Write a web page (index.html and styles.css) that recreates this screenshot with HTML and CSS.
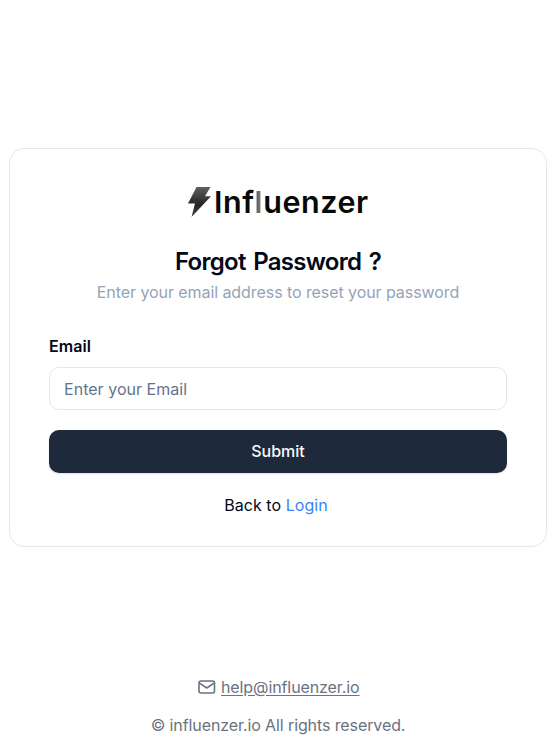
FILE: index.html
```html
<!DOCTYPE html>
<html lang="en">
<head>
<meta charset="utf-8">
<title>Forgot Password</title>
<link rel="stylesheet" href="styles.css">
</head>
<body>
<main class="card">
  <div class="logo">
    <svg class="bolt" viewBox="0 0 23 30" aria-hidden="true">
      <defs><linearGradient id="g" x1="0" y1="0" x2="0" y2="1"><stop offset="0" stop-color="#606060"/><stop offset=".6" stop-color="#242424"/><stop offset="1" stop-color="#444"/></linearGradient></defs>
      <path d="M8.5 0H22.5L17 9.3H23L3.5 30L7 16.5H0Z" fill="url(#g)"/>
    </svg>
    <span class="brand">Inf<span class="fade">l</span>uenzer</span>
  </div>
  <h1 class="title">Forgot Password ?</h1>
  <p class="subtitle">Enter your email address to reset your password</p>
  <form class="form">
    <label class="label" for="email">Email</label>
    <input class="input" id="email" type="email" placeholder="Enter your Email">
    <button class="submit" type="button">Submit</button>
  </form>
  <p class="back">Back to <a class="login" href="#">Login</a></p>
</main>
<footer class="footer">
  <div class="contact">
    <svg class="mail" viewBox="0 0 18 14" aria-hidden="true"><rect x="1" y="1" width="15.5" height="12" rx="2"/><path d="M1.5 3.2L8.75 8L16 3.2"/></svg>
    <a class="help" href="#">help@influenzer.io</a>
  </div>
  <p class="rights">© influenzer.io All rights reserved.</p>
</footer>
</body>
</html>
```
FILE: styles.css
```css
* { box-sizing: border-box; }
body {
  margin: 0;
  height: 744px;
  overflow: hidden;
  background: #fff;
  color: #020817;
  font: 400 16px/24px Inter, "Liberation Sans", sans-serif;
}
h1, p { margin: 0; }
.card {
  width: 538px;
  height: 399px;
  margin: 148px 0 0 9px;
  padding: 37px 39px 0;
  border: 1px solid #e2e8f0;
  border-radius: 15px;
}
.logo {
  display: flex;
  height: 32px;
  padding: 1px 0 0 139px;
}
.bolt { flex: none; width: 23px; height: 30px; }
.brand {
  margin: -1px 0 0 3px;
  color: #080808;
  font-size: 30.5px;
  font-weight: 600;
  line-height: 32px;
  letter-spacing: 0.55px;
  white-space: nowrap;
}
.fade {
  background: linear-gradient(90deg, #555, #888);
  background-clip: text;
  color: transparent;
}
.title {
  margin-top: 27px;
  text-align: center;
  font-size: 24px;
  font-weight: 600;
  line-height: 34px;
  letter-spacing: -0.7px;
  word-spacing: 2px;
}
.subtitle {
  margin-top: -1px;
  color: #94a3b8;
  text-align: center;
  line-height: 28px;
  letter-spacing: -0.07px;
}
.form { display: flex; flex-direction: column; margin-top: 27px; }
.label { font-weight: 600; line-height: 26px; letter-spacing: 0.1px; }
.input {
  height: 43px;
  margin-top: 8px;
  padding: 0 14px;
  border: 1px solid #e2e8f0;
  border-radius: 10px;
  font: inherit;
  letter-spacing: 0.03px;
}
.input::placeholder { color: #64748b; opacity: 1; }
.submit {
  height: 43px;
  margin-top: 20px;
  padding: 0 0 2px;
  border: 0;
  border-radius: 10px;
  background: #1e293b;
  box-shadow: 0 1px 2px rgb(0 0 0 / 12%);
  color: #f8fafc;
  font: inherit;
  font-weight: 500;
  letter-spacing: 0;
}
.back {
  margin-top: 20px;
  padding-right: 4px;
  text-align: center;
  letter-spacing: 0.05px;
}
.login { color: #3b82f6; text-decoration: none; }
.footer {
  margin-top: 128px;
  color: #6b7280;
  letter-spacing: -0.1px;
}
.contact { display: flex; align-items: center; padding-left: 198px; }
.mail {
  width: 18px;
  height: 14px;
  margin: 0 5px 0 0;
  fill: none;
  stroke: #6b7280;
  stroke-width: 1.6;
  stroke-linejoin: round;
}
.help { color: inherit; text-underline-offset: 2px; }
.rights { margin-top: 14px; padding-right: 4px; text-align: center; }
```
